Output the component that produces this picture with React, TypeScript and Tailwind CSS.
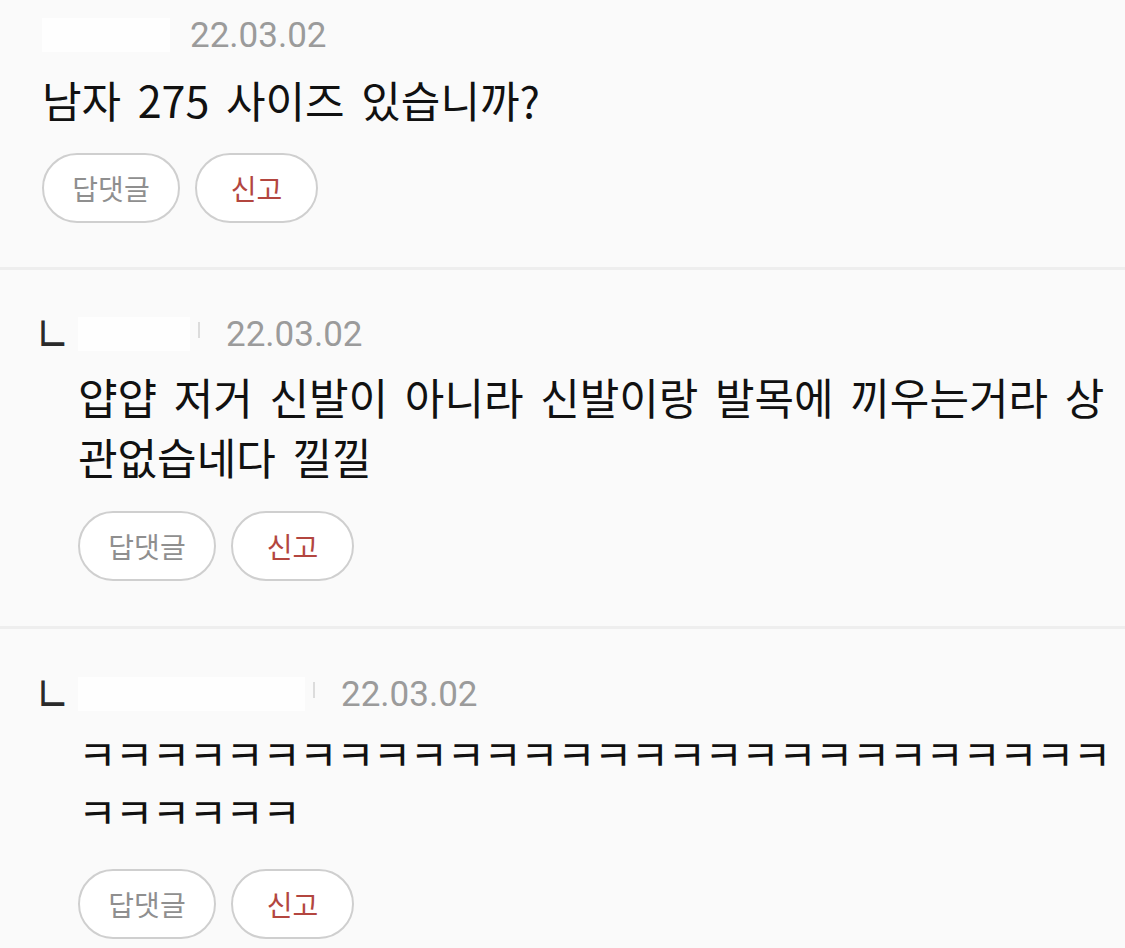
import React from "react";

type CommentProps = {
  reply?: boolean;
  nameWidth: number;
  lines: string[];
  textClass: string;
  topPad: string;
  textGap: string;
  buttonGap: string;
  bottomPad: string;
  divider?: boolean;
};

const KR = "font-['Noto_Sans_CJK_KR','Noto_Sans',sans-serif]";

const Comment: React.FC<CommentProps> = ({
  reply,
  nameWidth,
  lines,
  textClass,
  topPad,
  textGap,
  buttonGap,
  bottomPad,
  divider = true,
}) => {
  const indent = reply ? "pl-[78px]" : "pl-[42px]";

  return (
    <div className={divider ? "border-b-[3px] border-[#eeeeee]" : ""}>
      <div className={`${topPad} ${bottomPad}`}>
        {/* header: reply mark, hidden nickname, date */}
        <div className={`flex h-[60px] items-center ${reply ? "pl-[34px]" : "pl-[42px]"}`}>
          {reply && (
            <span className="w-[44px] translate-y-[5px]">
              <span className={`${KR} inline-block origin-bottom scale-y-[1.35] text-[40px] leading-none text-[#2a2a2a]`}>
                ㄴ
              </span>
            </span>
          )}
          <span className="h-[34px] bg-white/80" style={{ width: nameWidth }} />
          {reply ? (
            <>
              <span className="ml-[8px] h-[16px] w-[2px] -translate-y-[4px] bg-[#dcdcdc]" />
              <span className="ml-[26px] font-['Roboto',sans-serif] text-[35px] leading-none text-[#9b9b9b]">
                22.03.02
              </span>
            </>
          ) : (
            <span className="ml-[20px] font-['Roboto',sans-serif] text-[35px] leading-none text-[#9b9b9b]">
              22.03.02
            </span>
          )}
        </div>

        <div className={`${indent} ${textGap} ${KR} whitespace-nowrap text-[#111] ${textClass}`}>
          {lines.map((line, i) => (
            <div key={i}>{line}</div>
          ))}
        </div>

        <div className={`${indent} ${buttonGap} flex gap-[15px] ${KR}`}>
          <button
            type="button"
            className="flex h-[70px] w-[138px] items-center justify-center rounded-full border-2 border-[#cfcfcf] bg-white text-[28px] text-[#8f8f8f]"
          >
            답댓글
          </button>
          <button
            type="button"
            className="flex h-[70px] w-[123px] items-center justify-center rounded-full border-2 border-[#cfcfcf] bg-white text-[28px] text-[#b3463f]"
          >
            신고
          </button>
        </div>
      </div>
    </div>
  );
};

export default function App() {
  return (
    <div className="h-[948px] w-[1125px] overflow-hidden bg-[#fafafa]">
      <Comment
        nameWidth={128}
        lines={["남자 275 사이즈 있습니까?"]}
        textClass="text-[43px] leading-[60px] [word-spacing:7px]"
        topPad="pt-[5px]"
        textGap="mt-[4px]"
        buttonGap="mt-[24px]"
        bottomPad="pb-[44px]"
      />
      <Comment
        reply
        nameWidth={112}
        lines={["얍얍 저거 신발이 아니라 신발이랑 발목에 끼우는거라 상", "관없습네다 낄낄"]}
        textClass="text-[43px] leading-[60px] [word-spacing:7px]"
        topPad="pt-[34px]"
        textGap="mt-[2px]"
        buttonGap="mt-[25px]"
        bottomPad="pb-[45px]"
      />
      <Comment
        reply
        nameWidth={227}
        lines={["ㅋㅋㅋㅋㅋㅋㅋㅋㅋㅋㅋㅋㅋㅋㅋㅋㅋㅋㅋㅋㅋㅋㅋㅋㅋㅋㅋㅋ", "ㅋㅋㅋㅋㅋㅋ"]}
        textClass="text-[42px] leading-[58px] tracking-[-1.8px]"
        topPad="pt-[35px]"
        textGap="mt-0"
        buttonGap="mt-[29px]"
        bottomPad="pb-[20px]"
        divider={false}
      />
    </div>
  );
}
